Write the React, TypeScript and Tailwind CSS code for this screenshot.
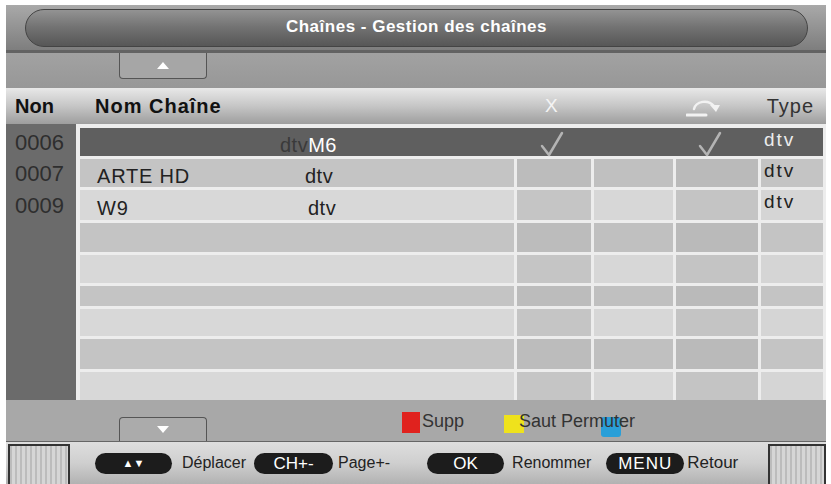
import React from "react";

type Row = { h: string; num?: string; name?: string; dtvGap?: string; sel?: boolean; dark?: boolean };

const rows: Row[] = [
  { h: "h-[28px]", num: "0006", sel: true },
  { h: "h-[28px]", num: "0007", name: "ARTE HD", dtvGap: "w-[208px]", dark: true },
  { h: "h-[30px]", num: "0009", name: "W9", dtvGap: "w-[211px]" },
  { h: "h-[29px]", dark: true },
  { h: "h-[28px]" },
  { h: "h-[20px]", dark: true },
  { h: "h-[27px]" },
  { h: "h-[30px]", dark: true },
  { h: "h-[28px]" },
];

const Check = () => (
  <svg width="26" height="26" viewBox="0 0 26 26" className="mt-[3px]">
    <path d="M3 15 L10 24 L23 2" fill="none" stroke="#b4b4b4" strokeWidth="2.5" strokeLinecap="round" strokeLinejoin="round" />
  </svg>
);

const SwapIcon = () => (
  <svg width="36" height="22" viewBox="0 0 36 22">
    <path d="M8 12 C10 4, 22 2, 28 9" fill="none" stroke="#f2f2f2" strokeWidth="2.5" strokeLinecap="round" />
    <polygon points="24,8 34,8 30,15" fill="#f2f2f2" />
    <path d="M1 18 H20" stroke="#f2f2f2" strokeWidth="3" strokeLinecap="round" />
  </svg>
);

const Pill = ({ children, w }: { children: React.ReactNode; w: string }) => (
  <div className={`${w} h-[21px] rounded-full bg-[#1c1c1c] flex items-center justify-center text-white text-[17px] leading-none`}>
    {children}
  </div>
);

const StripeBox = () => (
  <div className="h-[44px] mt-[2px] border-2 border-[#333] bg-[repeating-linear-gradient(90deg,#bcbcbc_0px,#bcbcbc_2px,#d6d6d6_2px,#d6d6d6_5px)]" />
);

export default function App() {
  return (
    <div className="w-[831px] h-[484px] bg-white pt-[5px] pl-[6px] overflow-hidden font-['Liberation_Sans',Arial,sans-serif]">
      <div className="w-[820px] h-[479px] flex flex-col overflow-hidden">
        {/* title */}
        <div className="h-[48px] flex items-center pl-[19px] pr-[18px] bg-gradient-to-b from-[#a9a9a9] to-[#7e7e7e] border-b-[3px] border-[#636363]">
          <div className="flex-1 h-[38px] rounded-full border-[1.5px] border-[#444] bg-gradient-to-b from-[#939393] via-[#717171] to-[#575757] flex items-center justify-center">
            <span className="text-white font-bold text-[17px] tracking-[0.5px] -mt-[1px]">Chaînes - Gestion des chaînes</span>
          </div>
        </div>

        {/* up tab */}
        <div className="h-[35px] bg-gradient-to-b from-[#a2a2a2] to-[#979797] pl-[113px]">
          <div className="w-[88px] h-[26px] border-x-[1.5px] border-b-[1.5px] border-[#555] rounded-b-[4px] bg-[#a6a6a6] flex items-center justify-center">
            <div className="w-0 h-0 border-x-[6px] border-x-transparent border-b-[7px] border-b-white" />
          </div>
        </div>

        {/* header */}
        <div className="h-[36px] flex items-center bg-gradient-to-b from-[#e8e8e8] via-[#c6c6c6] to-[#9e9e9e] text-[20px]">
          <span className="w-[70px] pl-[9px] font-bold text-[#111]">Non</span>
          <span className="w-[439px] pl-[19px] font-bold tracking-[1px] text-[#111]">Nom Chaîne</span>
          <span className="ml-[30px] text-[#f4f4f4] text-[19px]">X</span>
          <span className="ml-[128px] mt-[4px]"><SwapIcon /></span>
          <span className="ml-[45px] tracking-[1px] text-[#333]">Type</span>
        </div>

        {/* body */}
        <div className="h-[276px] flex">
          <div className="w-[70px] bg-[#6b6b6b] flex flex-col pt-[4px] gap-[3px]">
            {rows.map((r, i) => (
              <div key={i} className={`${r.h} flex items-center pl-[9px] pt-[2px] text-[22px] leading-none text-[#2e2e2e]`}>
                {r.num}
              </div>
            ))}
          </div>
          <div className="flex-1 bg-[#ededed] pt-[4px] pl-[4px] pr-[3px] flex flex-col gap-[3px]">
            {rows.map((r, i) =>
              r.sel ? (
                <div key={i} className={`${r.h} grid grid-cols-[434px_74px_79px_82px_1fr] gap-x-[3px] bg-[#5f5f5f]`}>
                  <div className="flex items-center pt-[5px] pl-[17px] text-[20px] tracking-[0.5px] leading-none">
                    <span className="w-[183px]" />
                    <span className="text-[#3a3a3a]">dtv</span>
                    <span className="text-white">M6</span>
                  </div>
                  <div className="flex justify-center -ml-[4px]"><Check /></div>
                  <div />
                  <div className="flex justify-center -ml-[14px]"><Check /></div>
                  <div className="pl-[3px] pt-[2px] text-[19px] leading-none tracking-[2px] text-[#ececec]">dtv</div>
                </div>
              ) : (
                <div key={i} className={`${r.h} grid grid-cols-[434px_74px_79px_82px_1fr] gap-x-[3px]`}>
                  <div className={`${r.dark ? "bg-[#c4c4c4]" : "bg-[#d8d8d8]"} flex items-center pt-[5px] pl-[17px] text-[20px] tracking-[0.04em] leading-none text-[#222]`}>
                    {r.name && (
                      <>
                        <span className={r.dtvGap}>{r.name}</span>
                        <span className="tracking-[0.5px]">dtv</span>
                      </>
                    )}
                  </div>
                  <div className={r.dark ? "bg-[#bcbcbc]" : "bg-[#c5c5c5]"} />
                  <div className={r.dark ? "bg-[#c0c0c0]" : "bg-[#d7d7d7]"} />
                  <div className={r.dark ? "bg-[#bababa]" : "bg-[#c4c4c4]"} />
                  <div className={`${r.dark ? "bg-[#c4c4c4]" : "bg-[#d5d5d5]"} pl-[3px] pt-[2px] text-[19px] leading-none tracking-[2px] text-[#222]`}>
                    {r.name ? "dtv" : ""}
                  </div>
                </div>
              )
            )}
          </div>
        </div>

        {/* colour keys and down tab */}
        <div className="h-[41px] bg-[#a8a8a8] flex items-end pl-[113px]">
          <div className="w-[88px] h-[24px] border-x-[1.5px] border-t-[1.5px] border-[#555] rounded-t-[4px] bg-[#ababab] flex items-center justify-center">
            <div className="w-0 h-0 border-x-[6px] border-x-transparent border-t-[7px] border-t-white" />
          </div>
          <div className="self-start mt-[12px] ml-[195px] flex items-center text-[18px] text-[#333] leading-none">
            <div className="w-[18px] h-[21px] bg-[#e0221e]" />
            <span className="ml-[2px] -mt-[4px]">Supp</span>
            <div className="ml-[40px] mt-[3px] w-[20px] h-[18px] bg-[#efe21c]" />
            <div className="relative -ml-[5px] -mt-[4px]">
              <div className="absolute left-[82px] top-[5px] w-[20px] h-[20px] bg-[#2a9fd8] rounded-[3px]" />
              <span className="relative">Saut Permuter</span>
            </div>
          </div>
        </div>

        {/* key bar */}
        <div className="h-[43px] flex items-start border-t border-[#666] bg-gradient-to-b from-[#dedede] via-[#cfcfcf] to-[#b2b2b2] text-[16px] text-[#222]">
          <div className="ml-[2px] w-[62px]"><StripeBox /></div>
          <div className="self-center flex items-center ml-[25px]">
            <Pill w="w-[77px]">
              <span className="text-[11px]">▲▼</span>
            </Pill>
            <span className="ml-[10px]">Déplacer</span>
            <div className="ml-[8px]">
              <Pill w="w-[79px]">CH+-</Pill>
            </div>
            <span className="ml-[5px]">Page+-</span>
            <div className="ml-[37px]">
              <Pill w="w-[77px]">OK</Pill>
            </div>
            <span className="ml-[8px]">Renommer</span>
            <div className="ml-[15px]">
              <Pill w="w-[78px]">
                <span className="tracking-[1px]">MENU</span>
              </Pill>
            </div>
            <span className="ml-[3px] text-[17px]">Retour</span>
          </div>
          <div className="ml-auto w-[58px]"><StripeBox /></div>
        </div>
      </div>
    </div>
  );
}
